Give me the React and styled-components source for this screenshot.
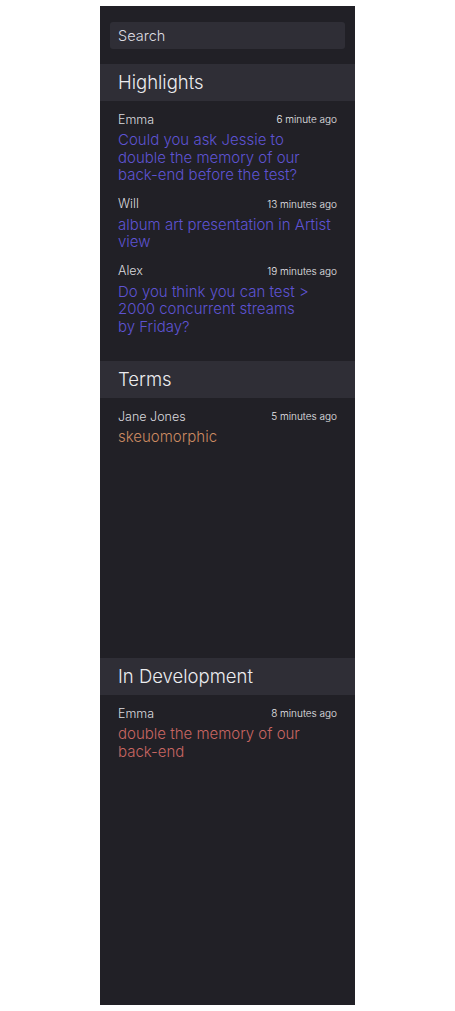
import styled, { createGlobalStyle } from "styled-components";

const Global = createGlobalStyle`
  body {
    margin: 0;
    padding: 6px 0;
    background: #ffffff;
    font-family: Inter, "Noto Sans", sans-serif;
  }
`;

const Panel = styled.div`
  width: 255px;
  height: 999px;
  margin: 0 auto;
  background-color: #212026;
  display: flex;
  flex-direction: column;
`;

const SearchWrap = styled.div`
  padding: 16px 10px 15px;
`;

const SearchBox = styled.div`
  height: 27px;
  border-radius: 3px;
  background-color: #2f2e36;
  color: #dddce2;
  font-size: 14.5px;
  font-weight: 300;
  line-height: 27px;
  padding-left: 8px;
`;

const Section = styled.section`
  display: flex;
  flex-direction: column;
  height: ${(p) => (p.fill ? "auto" : "297px")};
  flex: ${(p) => (p.fill ? 1 : "none")};
`;

const Header = styled.div`
  height: 37px;
  line-height: 37px;
  padding-left: 18px;
  background-color: #2f2e36;
  color: #ececef;
  font-size: 18.5px;
  font-weight: 300;
`;

const List = styled.div`
  display: flex;
  flex-direction: column;
  gap: 2px;
  padding: 0 18px;
`;

const Item = styled.div`
  padding-top: 9px;
`;

const Meta = styled.div`
  display: flex;
  justify-content: space-between;
  align-items: center;
  height: 18px;
`;

const Name = styled.span`
  color: #dad9de;
  font-size: 12.5px;
  font-weight: 300;
`;

const Time = styled.span`
  color: #e8e8eb;
  font-size: 10px;
  font-weight: 300;
`;

const Message = styled.div`
  margin-top: 3px;
  font-size: 15px;
  font-weight: 300;
  line-height: 17.5px;
  white-space: pre-line;
  color: ${(p) => p.color};
`;

const sections = [
  {
    title: "Highlights",
    color: "#5e53d2",
    items: [
      {
        name: "Emma",
        time: "6 minute ago",
        text: "Could you ask Jessie to\ndouble the memory of our\nback-end before the test?",
      },
      {
        name: "Will",
        time: "13 minutes ago",
        text: "album art presentation in Artist\nview",
      },
      {
        name: "Alex",
        time: "19 minutes ago",
        text: "Do you think you can test >\n2000 concurrent streams\nby Friday?",
      },
    ],
  },
  {
    title: "Terms",
    color: "#cc8a62",
    items: [{ name: "Jane Jones", time: "5 minutes ago", text: "skeuomorphic" }],
  },
  {
    title: "In Development",
    color: "#c86662",
    fill: true,
    items: [
      {
        name: "Emma",
        time: "8 minutes ago",
        text: "double the memory of our\nback-end",
      },
    ],
  },
];

const App = () => {
  return (
    <>
      <Global />
      <Panel>
        <SearchWrap>
          <SearchBox>Search</SearchBox>
        </SearchWrap>
        {sections.map((s) => (
          <Section key={s.title} fill={s.fill}>
            <Header>{s.title}</Header>
            <List>
              {s.items.map((it, i) => (
                <Item key={i}>
                  <Meta>
                    <Name>{it.name}</Name>
                    <Time>{it.time}</Time>
                  </Meta>
                  <Message color={s.color}>{it.text}</Message>
                </Item>
              ))}
            </List>
          </Section>
        ))}
      </Panel>
    </>
  );
};

export default App;
